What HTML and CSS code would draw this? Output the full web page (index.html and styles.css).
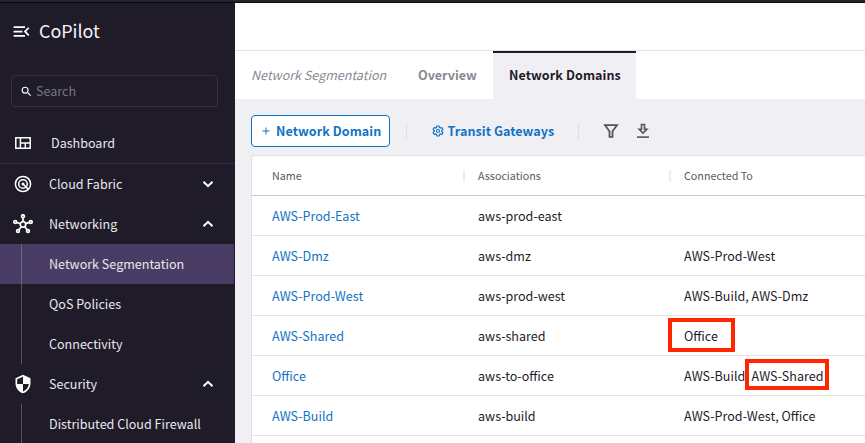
FILE: index.html
```html
<!DOCTYPE html>
<html lang="en">
<head>
<meta charset="utf-8">
<title>CoPilot</title>
<link rel="stylesheet" href="styles.css">
</head>
<body>
<div class="topstrip"></div>
<div class="app">
  <nav class="sidebar">
    <div class="brand">
      <svg class="menu-icon" viewBox="0 0 24 24"><path d="M3 18h13v-2H3v2zM3 13h10v-2H3v2zm0-7v2h13V6H3zm18 9.590L17.420 12 21 8.410 19.590 7l-5 5 5 5L21 15.590z"/></svg>
      <span class="brand-name">CoPilot</span>
    </div>
    <div class="search">
      <svg class="search-icon" viewBox="0 0 24 24"><path d="M15.500 14h-.79l-.28-.27A6.470 6.470 0 0 0 16 9.500 6.500 6.500 0 1 0 9.500 16c1.610 0 3.090-.590 4.230-1.570l.27.280v.790l5 4.990L20.490 19l-4.990-5zm-6 0a4.500 4.500 0 1 1 0-9 4.500 4.500 0 0 1 0 9z"/></svg>
      <span class="placeholder">Search</span>
    </div>
    <div class="item dashboard">
      <svg class="icon" viewBox="0 0 20 20"><path class="line" d="M2.800 4.800h14.400v10.400H2.800zM7.400 4.800v10.400M7.400 9.900h9.800M12.300 9.900v5.300"/></svg>
      <span class="label label-dashboard">Dashboard</span>
    </div>
    <div class="item">
      <svg class="icon" viewBox="0 0 20 20"><circle class="line" cx="10" cy="10" r="7.600"/><circle class="line" cx="10" cy="10" r="4.300"/><circle cx="10" cy="10" r="1.500"/><path class="line" d="M10 10l5.400 5.400"/></svg>
      <span class="label">Cloud Fabric</span>
      <svg class="chevron" viewBox="0 0 12 12"><path d="M1.500 3.800L6 8.200l4.500-4.400"/></svg>
    </div>
    <div class="item">
      <svg class="icon" viewBox="0 0 20 20"><g class="line bold"><circle cx="10" cy="10.400" r="2.700"/><circle cx="10" cy="2.200" r="1.400"/><circle cx="2.200" cy="8" r="1.400"/><circle cx="17.800" cy="8" r="1.400"/><circle cx="5" cy="17" r="1.400"/><circle cx="15" cy="17" r="1.400"/><path d="M10 3.700v4M3.500 8.400l3.900 1.200M16.500 8.400l-3.900 1.200M6 15.700l2.300-3.100M14 15.700l-2.300-3.100"/></g></svg>
      <span class="label">Networking</span>
      <svg class="chevron" viewBox="0 0 12 12"><path d="M1.500 8.200L6 3.800l4.500 4.400"/></svg>
    </div>
    <div class="sub selected"><span class="label">Network Segmentation</span></div>
    <div class="sub"><span class="label">QoS Policies</span></div>
    <div class="sub"><span class="label">Connectivity</span></div>
    <div class="item">
      <svg class="icon" viewBox="0 0 24 24"><path d="M12 1L3 5v6c0 5.550 3.840 10.740 9 12 5.160-1.260 9-6.450 9-12V5l-9-4zm0 10.990h7c-.53 4.120-3.280 7.790-7 8.940V12H5V6.300l7-3.110v8.800z"/></svg>
      <span class="label">Security</span>
      <svg class="chevron" viewBox="0 0 12 12"><path d="M1.500 8.200L6 3.800l4.500 4.400"/></svg>
    </div>
    <div class="sub last"><span class="label">Distributed Cloud Firewall</span></div>
  </nav>
  <main class="main">
    <header class="header"></header>
    <div class="tabs">
      <span class="tab crumb">Network Segmentation</span>
      <span class="tab overview">Overview</span>
      <span class="tab active">Network Domains</span>
    </div>
    <div class="toolbar">
      <button class="add"><svg class="plus" viewBox="0 0 8 8"><path d="M4 .5v7M.5 4h7"/></svg><span>Network Domain</span></button>
      <i class="divider"></i>
      <span class="transit"><svg class="gear" viewBox="0 0 24 24"><path d="M19.430 12.980c.04-.32.070-.640.070-.980s-.030-.660-.070-.980l2.110-1.650c.19-.15.240-.42.120-.64l-2-3.460c-.12-.22-.39-.3-.61-.22l-2.490 1c-.52-.4-1.080-.73-1.690-.98l-.38-2.650A.49.49 0 0 0 14 2h-4c-.25 0-.46.180-.49.420l-.38 2.650c-.61.250-1.170.590-1.690.980l-2.490-1c-.23-.090-.49 0-.61.220l-2 3.460c-.13.220-.070.490.120.640l2.110 1.650c-.040.320-.070.650-.070.980s.030.660.070.980l-2.110 1.650c-.19.150-.24.420-.12.640l2 3.460c.120.220.390.300.610.220l2.490-1c.520.400 1.080.730 1.690.980l.380 2.650c.030.240.240.420.490.420h4c.250 0 .460-.180.490-.420l.380-2.650c.610-.250 1.170-.590 1.690-.980l2.490 1c.230.090.490 0 .610-.220l2-3.460c.120-.220.070-.490-.120-.640l-2.110-1.650z"/><circle cx="12" cy="12" r="3"/></svg><span>Transit Gateways</span></span>
      <i class="divider divider-two"></i>
      <svg class="tool filter" viewBox="0 0 16 16"><path d="M2 2.200h12L9.500 8.200v5.600h-3V8.200z"/></svg>
      <svg class="tool download" viewBox="0 0 16 16"><path d="M6.500 1.500h3v4.700h2.300L8 10 4.200 6.200h2.300z"/><path d="M2 14.100h12"/></svg>
    </div>
    <section class="table">
      <div class="row head"><span class="cell">Name</span><span class="cell">Associations</span><span class="cell">Connected To</span></div>
      <div class="row"><a class="cell">AWS-Prod-East</a><span class="cell">aws-prod-east</span><span class="cell"></span></div>
      <div class="row"><a class="cell">AWS-Dmz</a><span class="cell">aws-dmz</span><span class="cell">AWS-Prod-West</span></div>
      <div class="row"><a class="cell">AWS-Prod-West</a><span class="cell">aws-prod-west</span><span class="cell">AWS-Build, AWS-Dmz</span></div>
      <div class="row"><a class="cell">AWS-Shared</a><span class="cell">aws-shared</span><span class="cell">Office</span></div>
      <div class="row"><a class="cell">Office</a><span class="cell">aws-to-office</span><span class="cell">AWS-Build, AWS-Shared</span></div>
      <div class="row"><a class="cell">AWS-Build</a><span class="cell">aws-build</span><span class="cell">AWS-Prod-West, Office</span></div>
    </section>
  </main>
</div>
<div class="mark mark-office"></div>
<div class="mark mark-shared"></div>
</body>
</html>
```
FILE: styles.css
```css
* { box-sizing: border-box; }
body { margin: 0; width: 865px; height: 443px; overflow: hidden; position: relative; background: #fff; font: 12.55px/20px "Noto Sans CJK SC", "Noto Sans", sans-serif; color: #1f1b29; }
svg { display: block; flex: none; }
span, a { white-space: nowrap; }
.topstrip { height: 3px; background: #27252c; border-bottom: 1px solid #09080b; }
.app { display: flex; height: 440px; }
.sidebar { width: 235px; flex: none; background: #1f1b29; color: #e9e8ea; overflow: hidden; }
.brand { height: 56px; padding-left: 10.500px; display: flex; align-items: center; }
.menu-icon { width: 21px; height: 21px; fill: #fff; }
.brand-name { margin: 0 0 2px 7.500px; font-size: 17.900px; line-height: 24px; color: #f4f3f5; }
.search { width: 207px; height: 32px; margin: 16px 0 0 11px; border: 1px solid #352e4c; border-radius: 4px; display: flex; align-items: center; padding-left: 7.500px; }
.search-icon { width: 13px; height: 13px; fill: #fff; }
.placeholder { margin-left: 3.500px; color: #79767f; }
.item { height: 40px; display: flex; align-items: center; padding-left: 13px; }
.dashboard { height: 41px; margin-top: 16px; border-bottom: 1px solid #352e4c; }
.label-dashboard { padding-left: 2px; }
.icon { width: 20px; height: 20px; fill: #fff; margin-right: 16px; }
.line { fill: none; stroke: #fff; stroke-width: 1.5; }
.bold { stroke-width: 1.7; }
.chevron { width: 12px; height: 12px; margin: 0 21px 0 auto; fill: none; stroke: #fff; stroke-width: 2; }
.sub { height: 40px; width: 213px; margin-left: 21px; padding-left: 27px; border-left: 1px solid #57545f; display: flex; align-items: center; }
.selected { box-shadow: -21px 0 0 #483c64; background: #483c64; border-left-color: #6d647f; }
.last { height: 39px; padding-top: 1px; }
.main { width: 630px; background: #f0eff4; overflow: hidden; }
.header { height: 48px; background: #fff; border-bottom: 1px solid #e2e2e5; }
.tabs { height: 48px; background: #fff; display: flex; font-weight: 700; }
.tab { display: flex; align-items: center; color: #898891; }
.crumb { width: 183px; padding-left: 16px; font-weight: 400; font-style: italic; }
.overview { width: 75px; }
.active { width: 143px; padding-left: 16px; border-top: 2px solid #1f1b29; padding-bottom: 2px; background: #f0eff4; color: #1f1b29; letter-spacing: .08px; }
.toolbar { height: 56px; padding-left: 16px; display: flex; align-items: center; font-weight: 700; color: #1273c4; padding-top: 8px; letter-spacing: .06px; }
.add { width: 139px; height: 32px; padding: 0 0 0 10px; border: 1px solid #1273c4; border-radius: 4px; background: #fff; color: inherit; font: inherit; letter-spacing: inherit; display: flex; align-items: center; }
.plus { width: 8px; height: 8px; margin-right: 6px; fill: none; stroke: #1273c4; }
.divider { width: 1px; height: 16px; background: #dedde2; margin-left: 16px; }
.transit { width: 147px; padding-left: 24.500px; display: flex; align-items: center; }
.gear { width: 12px; height: 12px; margin-right: 4px; fill: none; stroke: #1273c4; stroke-width: 2.300; }
.divider-two { margin-left: 24px; }
.tool { width: 16px; height: 16px; fill: none; stroke: #55535c; stroke-width: 1.800; }
.filter { margin-left: 24px; }
.download { margin-left: 16px; stroke-width: 1.600; }
.table { margin-left: 16px; border: 1px solid #e0dfe5; border-width: 1px 0 0 1px; border-radius: 4px 0 0 0; background: #fff; height: 288px; overflow: hidden; }
.row { height: 40px; display: grid; grid-template-columns: 206px 206px 1fr; align-items: center; padding-left: 20px; border-bottom: 1px solid #e3e3e6; }
.head { font-size: 10.750px; color: #5c5a64; border-bottom-color: #c9c7d3; padding-top: 1px; }
.head .cell { display: flex; align-items: center; }
.head .cell:nth-child(-n+2)::after { content: ""; width: 2px; height: 12px; margin: 0 13px 0 auto; background: #eeedf0; }
a { color: #1273c4; }
.mark { position: absolute; border: 4px solid #ff2600; }
.mark-office { left: 668px; top: 318px; width: 67px; height: 34px; }
.mark-shared { left: 745px; top: 359px; width: 84px; height: 31px; }
```
